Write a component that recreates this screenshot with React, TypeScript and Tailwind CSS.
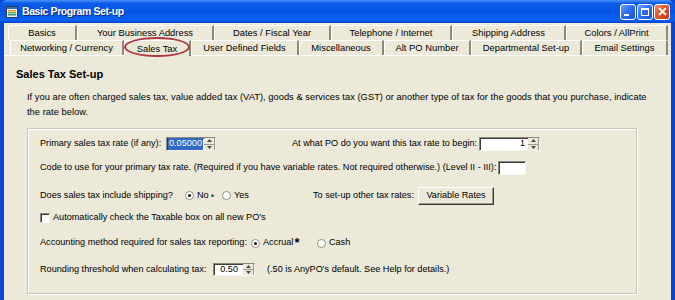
import clsx from 'clsx';

const tabsBack = [
  { label: 'Basics', w: 'w-[69px]' },
  { label: 'Your Business Address', w: 'w-[137px]' },
  { label: 'Dates / Fiscal Year', w: 'w-[117px]' },
  { label: 'Telephone / Internet', w: 'w-[121px]' },
  { label: 'Shipping Address', w: 'w-[114px]' },
  { label: 'Colors / AllPrint', w: 'w-[102px]' },
];

const tabsFront = [
  { label: 'Networking / Currency', w: 'w-[114px]' },
  { label: 'Sales Tax', w: 'w-[67px]', active: true },
  { label: 'User Defined Fields', w: 'w-[108px]' },
  { label: 'Miscellaneous', w: 'w-[85px]' },
  { label: 'Alt PO Number', w: 'w-[87px]' },
  { label: 'Departmental Set-up', w: 'w-[111px]' },
  { label: 'Email Settings', w: 'w-[86px]' },
];

function Tab({ label, w, active }: { label: string; w: string; active?: boolean }) {
  return (
    <div
      className={clsx(
        'flex shrink-0 items-center justify-center rounded-tl-[2px] border-l border-t border-r-2 border-l-white border-t-white border-r-[#8d8a7c] bg-[#ece9d8] text-[9.4px] whitespace-nowrap',
        w,
        active ? 'relative z-10 h-[16px] -mb-px' : 'h-[15px]'
      )}
    >
      {label}
    </div>
  );
}

function AppIcon() {
  return (
    <svg width="12" height="12" viewBox="0 0 12 12" className="shrink-0">
      <rect x="0.5" y="0.5" width="11" height="11" fill="#f4f1e4" stroke="#2b3a55" />
      <rect x="1" y="1" width="10" height="2" fill="#3a6ea8" />
      <rect x="2" y="4" width="8" height="1.5" fill="#e8962c" />
      <rect x="2" y="6" width="8" height="1.5" fill="#5cb84a" />
      <rect x="2" y="8" width="8" height="1.5" fill="#2e9a8e" />
    </svg>
  );
}

function WinButton({ kind }: { kind: 'min' | 'max' | 'close' }) {
  return (
    <div
      className={clsx(
        'flex h-[16px] w-[16px] items-center justify-center rounded-[3px] border border-white',
        kind === 'close'
          ? 'bg-[linear-gradient(135deg,#f08a6a_0%,#e2542c_45%,#c83a12_100%)]'
          : 'bg-[linear-gradient(135deg,#6fa2f8_0%,#2f6ff0_45%,#1a52d8_100%)]'
      )}
    >
      {kind === 'min' && <div className="mt-[7px] mr-[4px] h-[2px] w-[5px] bg-white" />}
      {kind === 'max' && <div className="h-[8px] w-[8px] border border-t-2 border-white" />}
      {kind === 'close' && (
        <svg width="9" height="9" viewBox="0 0 9 9">
          <path d="M1 1 L8 8 M8 1 L1 8" stroke="#fff" strokeWidth="1.8" />
        </svg>
      )}
    </div>
  );
}

function Spinner() {
  return (
    <div className="flex h-full w-[11px] shrink-0 flex-col">
      <div className="flex flex-1 items-center justify-center border-b border-r border-[#9d9a8c] bg-[#ece9d8]">
        <svg width="5" height="3" viewBox="0 0 5 3">
          <path d="M2.5 0 L5 3 L0 3 Z" fill="#4a4a4a" />
        </svg>
      </div>
      <div className="flex flex-1 items-center justify-center border-r border-[#9d9a8c] bg-[#ece9d8]">
        <svg width="5" height="3" viewBox="0 0 5 3">
          <path d="M0 0 L5 0 L2.5 3 Z" fill="#4a4a4a" />
        </svg>
      </div>
    </div>
  );
}

function Field({ className, children }: { className?: string; children?: React.ReactNode }) {
  return (
    <div
      className={clsx(
        'flex shrink-0 items-center border border-b-[#f6f5ef] border-l-[#8a887c] border-r-[#f6f5ef] border-t-[#8a887c] bg-white shadow-[inset_1px_1px_0_#3c3c3c]',
        className
      )}
    >
      {children}
    </div>
  );
}

function Radio({ checked }: { checked?: boolean }) {
  return (
    <svg width="9" height="9" viewBox="0 0 9 9" className="shrink-0">
      <circle cx="4.5" cy="4.5" r="4" fill="#fff" stroke="#8f8d80" />
      {checked && <circle cx="4.5" cy="4.5" r="1.6" fill="#1a1a1a" />}
    </svg>
  );
}

export default function App() {
  return (
    <div className="relative h-[300px] w-[675px] overflow-hidden bg-[#0a46d8] font-['Liberation_Sans',Arial,sans-serif] text-[9.15px] leading-none text-black">
      <div className="flex h-[23px] items-center rounded-t-[7px] bg-[linear-gradient(to_bottom,#4a93f7_0%,#0d5ce8_14%,#0453e6_50%,#0a62f2_85%,#0344d4_100%)] pl-[6px] pr-[5px]">
        <AppIcon />
        <span className="ml-[4px] text-[10.5px] font-bold tracking-[-0.4px] text-white [text-shadow:1px_1px_0_#0b2a7a]">
          Basic Program Set-up
        </span>
        <div className="ml-auto flex gap-[1px]">
          <WinButton kind="min" />
          <WinButton kind="max" />
          <WinButton kind="close" />
        </div>
      </div>

      <div className="h-[277px] border-x-4 border-l-[#0b47d6] border-r-[#0a44d2] bg-[#ece9d8]">
        <div className="pt-[2px]">
          <div className="ml-[4px] flex">
            {tabsBack.map((t) => (
              <Tab key={t.label} label={t.label} w={t.w} />
            ))}
          </div>
          <div className="ml-[6px] flex items-end">
            {tabsFront.map((t) => (
              <Tab key={t.label} label={t.label} w={t.w} active={t.active} />
            ))}
          </div>
        </div>

        <div className="border-t border-white px-[12px]">
          <h2 className="mt-[12px] text-[11px] font-bold leading-[13px]">Sales Tax Set-up</h2>
          <p className="ml-[11px] mt-[9px] whitespace-nowrap text-[9.3px] leading-[15px] tracking-[0.04px]">
            If you are often charged sales tax, value added tax (VAT), goods &amp; services tax (GST) or another type of tax for the goods that you purchase, indicate
            <br />
            the rate below.
          </p>

          <div className="ml-[11px] mt-[8px] w-[610px] border border-[#c9c5b5] pb-[17px] pl-[12px] pt-[8px] shadow-[inset_1px_1px_0_#fff,1px_1px_0_#fff]">
            <div className="flex h-[14px] items-center whitespace-nowrap">
              <span className="min-w-[126px] shrink-0">Primary sales tax rate (if any):</span>
              <Field className="h-[14px] w-[50px] justify-between">
                <span className="ml-[1px] bg-[#316ac5] px-[1px] py-[1px] text-white">0.05000</span>
                <Spinner />
              </Field>
              <span className="ml-[76px] min-w-[185px] shrink-0 pr-[2px]">At what PO do you want this tax rate to begin:</span>
              <Field className="h-[14px] w-[61px] justify-end">
                <span className="mr-[3px]">1</span>
                <Spinner />
              </Field>
            </div>

            <div className="mt-[10px] flex h-[14px] items-center whitespace-nowrap">
              <span className="min-w-[458px] shrink-0 pr-[2px]">
                Code to use for your primary tax rate. (Required if you have variable rates. Not required otherwise.) (Level II - III):
              </span>
              <Field className="h-[14px] w-[28px]" />
            </div>

            <div className="mt-[11px] flex h-[19px] items-center whitespace-nowrap">
              <span className="min-w-[145px] shrink-0 pr-[4px]">Does sales tax include shipping?</span>
              <div className="flex w-[37px] shrink-0 items-center">
                <Radio checked />
                <span className="ml-[3px]">No</span>
                <span className="ml-[2px] self-start pt-[4px] text-[9px]">*</span>
              </div>
              <div className="flex w-[91px] shrink-0 items-center">
                <Radio />
                <span className="ml-[3px]">Yes</span>
              </div>
              <span className="min-w-[105px] shrink-0 pr-[2px]">To set-up other tax rates:</span>
              <button className="flex h-[18px] w-[76px] items-center justify-center border border-b-[#3a3a3a] border-l-white border-r-[#3a3a3a] border-t-white bg-[#ece9d8] shadow-[inset_-1px_-1px_0_#9d9a8c]">
                Variable Rates
              </button>
            </div>

            <div className="mt-[7px] flex h-[12px] items-center whitespace-nowrap">
              <div className="h-[10px] w-[10px] shrink-0 border border-b-[#f6f5ef] border-l-[#8a887c] border-r-[#f6f5ef] border-t-[#8a887c] bg-white shadow-[inset_1px_1px_0_#3c3c3c]" />
              <span className="ml-[3px]">Automatically check the Taxable box on all new PO&apos;s</span>
            </div>

            <div className="mt-[13px] flex h-[12px] items-center whitespace-nowrap">
              <span className="min-w-[208px] shrink-0 pr-[4px]">Accounting method required for sales tax reporting:</span>
              <div className="flex w-[66px] shrink-0 items-center">
                <Radio checked />
                <span className="ml-[3px]">Accrual</span>
                <span className="ml-[1px] self-start text-[13px] font-bold leading-[10px]">*</span>
              </div>
              <Radio />
              <span className="ml-[3px]">Cash</span>
            </div>

            <div className="mt-[14px] flex h-[13px] items-center whitespace-nowrap">
              <span className="min-w-[173px] shrink-0 pr-[3px]">Rounding threshold when calculating tax:</span>
              <Field className="h-[13px] w-[42px] justify-end">
                <span className="mr-[5px]">0.50</span>
                <Spinner />
              </Field>
              <span className="ml-[12px]">(.50 is AnyPO&apos;s default. See Help for details.)</span>
            </div>
          </div>
        </div>
      </div>

      <div className="pointer-events-none absolute left-[124px] top-[37px] z-20 h-[20px] w-[66px] rounded-[50%] border-2 border-[#b03545]" />
    </div>
  );
}
